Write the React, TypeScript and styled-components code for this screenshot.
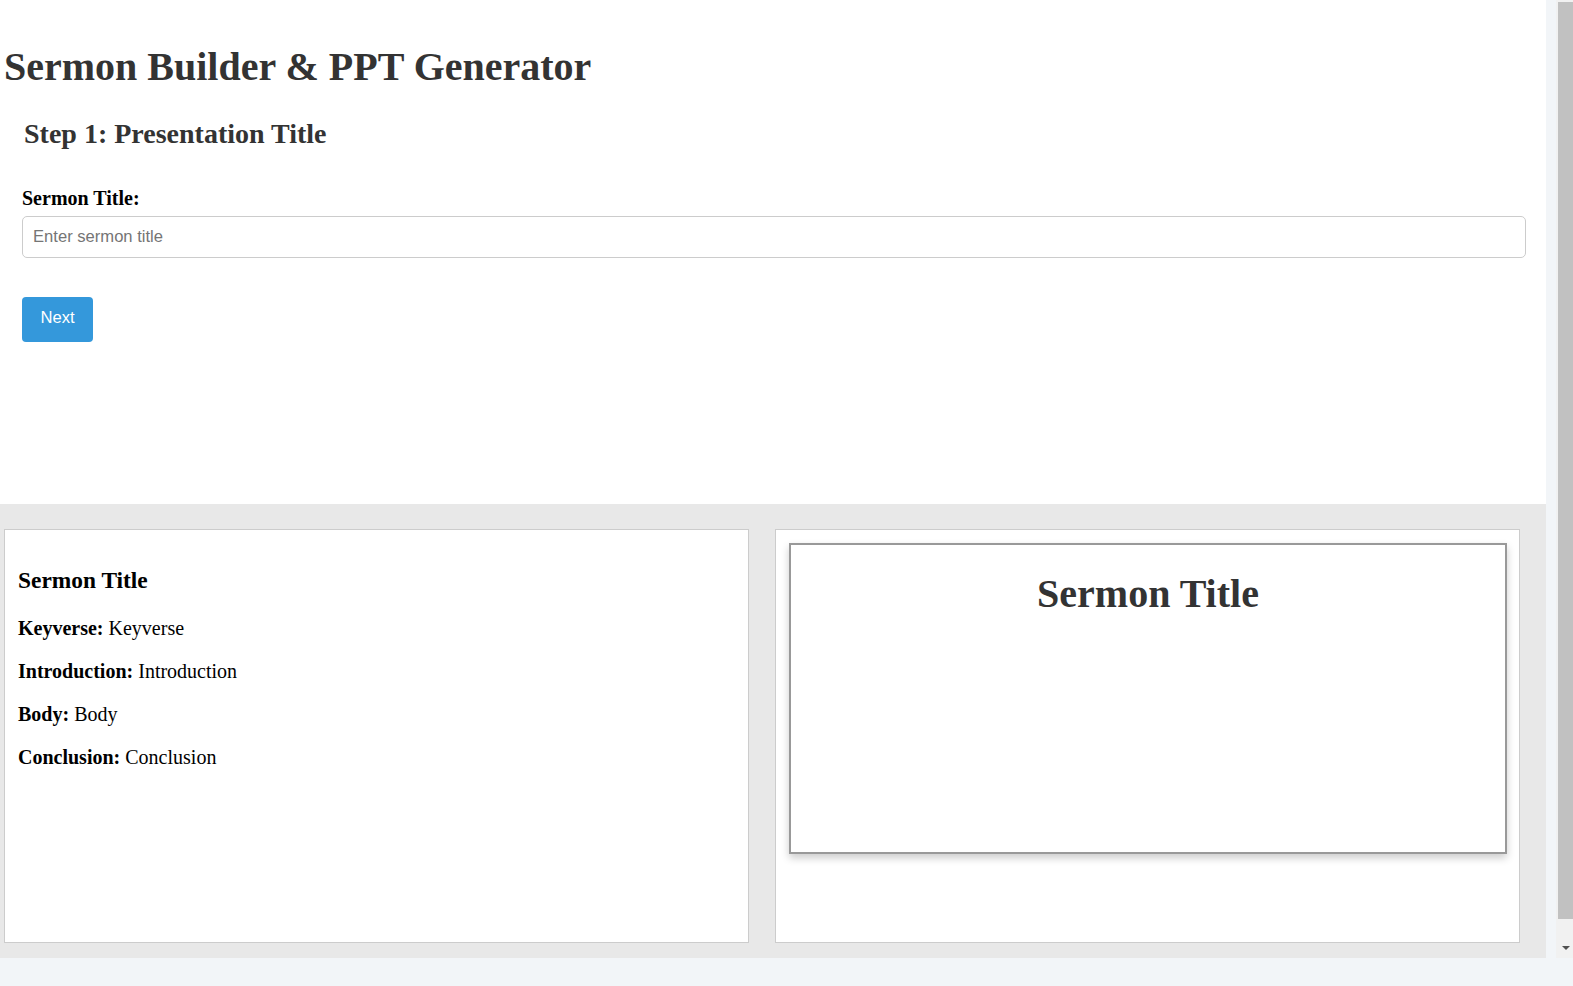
import React, { useState } from 'react';
import styled, { createGlobalStyle } from 'styled-components';

const GlobalStyle = createGlobalStyle`
  html, body {
    margin: 0;
    padding: 0;
    height: 100%;
    overflow: hidden;
    background: #f2f5f8;
    font-family: "Liberation Serif", "Times New Roman", serif;
  }
  #root {
    height: 100%;
  }
`;

const Frame = styled.div`
  display: flex;
  height: 958px;
`;

const Page = styled.div`
  flex: 1;
  min-width: 0;
  margin-right: 10px;
  overflow: hidden;
`;

const ScrollRail = styled.div`
  width: 17px;
  flex-shrink: 0;
  background: #f1f1f1;
  display: flex;
  flex-direction: column;
`;

const Thumb = styled.div`
  height: 917px;
  margin: 2px 0 0 2px;
  background: #c1c1c1;
`;

const RailButton = styled.div`
  margin-top: auto;
  height: 17px;
  display: flex;
  align-items: center;
  justify-content: center;
  &::after {
    content: '';
    margin: 0 0 3px 2px;
    border-left: 4px solid transparent;
    border-right: 4px solid transparent;
    border-top: 4px solid #505050;
  }
`;

const Builder = styled.section`
  background: #fff;
  height: 504px;
  padding: 19px 20px 0 4px;
  box-sizing: border-box;
`;

const Heading = styled.h1`
  margin: 24px 0 28px;
  font-size: 40px;
  color: #333;
`;

const Step = styled.div`
  padding-left: 18px;
`;

const StepTitle = styled.h2`
  margin: 0 0 37px 2px;
  font-size: 28px;
  color: #333;
`;

const Label = styled.label`
  display: block;
  font-weight: bold;
  font-size: 20px;
  color: #000;
  margin-bottom: 6px;
`;

const Input = styled.input`
  display: block;
  width: 100%;
  box-sizing: border-box;
  height: 42px;
  padding: 10px;
  font-family: "Liberation Sans", Arial, sans-serif;
  font-size: 16.6px;
  border: 1px solid #ccc;
  border-radius: 5px;
  outline: none;
  &::placeholder {
    color: #757575;
  }
`;

const NextButton = styled.button`
  margin-top: 39px;
  width: 71px;
  height: 45px;
  padding: 0 0 4px;
  background: #3498db;
  color: #fff;
  border: none;
  border-radius: 4px;
  font-family: "Liberation Sans", Arial, sans-serif;
  font-size: 16.6px;
  cursor: pointer;
`;

const Preview = styled.section`
  background: #e8e8e8;
  height: 479px;
  padding: 25px 0 0 4px;
  box-sizing: border-box;
  display: flex;
  align-items: flex-start;
  gap: 26px;
`;

const Panel = styled.div`
  width: 745px;
  height: 414px;
  box-sizing: border-box;
  background: #fff;
  border: 1px solid #ccc;
  padding: 14px 12px 13px 13px;
  font-size: 20px;
  color: #000;
`;

const Outline = styled(Panel)`
  h3 {
    margin: 23px 0;
  }
  p {
    margin: 20px 0;
  }
`;

const SlidePanel = styled(Panel)`
  padding: 13px 12px 13px 13px;
`;

const Slide = styled.div`
  height: 307px;
  border: 2px solid #999;
  background: #fff;
  box-shadow: 0 4px 8px rgba(0, 0, 0, 0.2);
  text-align: center;
  color: #333;
  h1 {
    margin: 25px 0;
    font-size: 40px;
  }
`;

const sections = ['Keyverse', 'Introduction', 'Body', 'Conclusion'];

export default function App() {
  const [title, setTitle] = useState('');
  return (
    <>
      <GlobalStyle />
      <Frame>
        <Page>
          <Builder>
            <Heading>Sermon Builder &amp; PPT Generator</Heading>
            <Step>
              <StepTitle>Step 1: Presentation Title</StepTitle>
              <Label htmlFor="sermon-title">Sermon Title:</Label>
              <Input
                id="sermon-title"
                placeholder="Enter sermon title"
                value={title}
                onChange={(e) => setTitle(e.target.value)}
              />
              <NextButton>Next</NextButton>
            </Step>
          </Builder>
          <Preview>
            <Outline>
              <h3>{title || 'Sermon Title'}</h3>
              {sections.map((s) => (
                <p key={s}>
                  <strong>{s}:</strong> {s}
                </p>
              ))}
            </Outline>
            <SlidePanel>
              <Slide>
                <h1>{title || 'Sermon Title'}</h1>
              </Slide>
            </SlidePanel>
          </Preview>
        </Page>
        <ScrollRail aria-hidden>
          <Thumb />
          <RailButton />
        </ScrollRail>
      </Frame>
    </>
  );
}
